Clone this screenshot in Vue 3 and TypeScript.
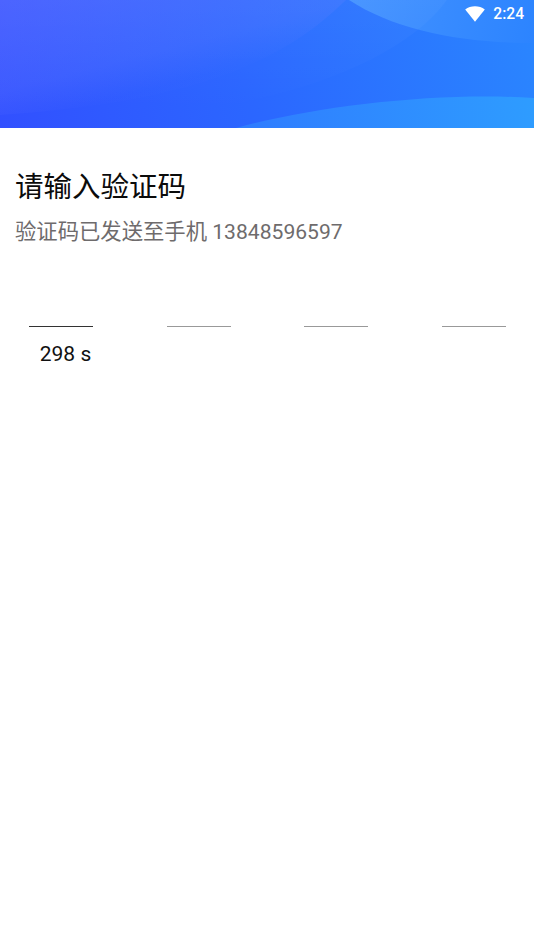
<script setup lang="ts">
const cells: boolean[] = [true, false, false, false]
</script>

<template>
  <main class="page">
    <header class="hero">
      <svg class="art" viewBox="0 0 534 128" preserveAspectRatio="none" aria-hidden="true">
        <defs>
          <linearGradient id="bg" x1="0" y1="128" x2="534" y2="0" gradientUnits="userSpaceOnUse">
            <stop offset="0" stop-color="#3250ff" />
            <stop offset="0.45" stop-color="#2b66ff" />
            <stop offset="1" stop-color="#2a86ff" />
          </linearGradient>
          <linearGradient id="bl" x1="0" y1="0" x2="31" y2="120" gradientUnits="userSpaceOnUse">
            <stop offset="0" stop-color="#7078ff" stop-opacity="0.36" />
            <stop offset="0.72" stop-color="#6c80ff" stop-opacity="0.2" />
            <stop offset="1" stop-color="#6c80ff" stop-opacity="0.02" />
          </linearGradient>
          <linearGradient id="md" x1="0" y1="0" x2="0" y2="110" gradientUnits="userSpaceOnUse">
            <stop offset="0" stop-color="#ffffff" stop-opacity="0.035" />
            <stop offset="1" stop-color="#ffffff" stop-opacity="0" />
          </linearGradient>
          <linearGradient id="tr" x1="350" y1="0" x2="534" y2="40" gradientUnits="userSpaceOnUse">
            <stop offset="0" stop-color="#4492ff" />
            <stop offset="1" stop-color="#2c84ff" />
          </linearGradient>
          <linearGradient id="br" x1="240" y1="128" x2="534" y2="100" gradientUnits="userSpaceOnUse">
            <stop offset="0" stop-color="#2f7cff" />
            <stop offset="1" stop-color="#2e9cff" />
          </linearGradient>
        </defs>
        <rect width="534" height="128" fill="url(#bg)" />
        <path d="M349 0C395 30 460 43 534 43V0Z" fill="url(#tr)" />
        <path d="M447 0C410 50 330 85 230 105C150 120 70 126 0 128V0Z" fill="url(#md)" />
        <path d="M346 0C305 40 260 65 200 83C140 101 70 110 0 115V0Z" fill="url(#bl)" />
        <path d="M236 128C320 105 440 92 534 98V128Z" fill="url(#br)" />
      </svg>
      <div class="status">
        <svg class="wifi" viewBox="0 0 20 16" aria-hidden="true">
          <path d="M0.2 3.6C3 1.4 6.3 0.3 10 0.3s7 1.1 9.8 3.3L10 15.8Z" fill="#fff" />
        </svg>
        <span class="time">2:24</span>
      </div>
    </header>

    <section class="intro">
      <h1 class="title">请输入验证码</h1>
      <p class="sub">验证码已发送至手机 <span class="num">13848596597</span></p>
    </section>

    <div class="cells">
      <span v-for="(active, i) in cells" :key="i" class="cell" :class="{ active }"></span>
    </div>
    <div class="timer">298 s</div>
  </main>
</template>

<style>
html, body { margin: 0; background: #fff; }
</style>

<style scoped>
.page {
  width: 534px;
  height: 949px;
  background: #fff;
  font-family: Roboto, "Noto Sans CJK SC", sans-serif;
  overflow: hidden;
}
.hero {
  position: relative;
  height: 128px;
}
.art {
  position: absolute;
  inset: 0;
  width: 100%;
  height: 100%;
  display: block;
}
.status {
  position: absolute;
  top: 5px;
  right: 10px;
  display: flex;
  align-items: center;
  gap: 8px;
  height: 18px;
  color: #fff;
}
.wifi { width: 20px; height: 16px; display: block; }
.time { font-size: 15.6px; font-weight: 500; line-height: 18px; }
.intro { padding: 43px 15px 0; }
.title {
  margin: 0;
  font-size: 28.5px;
  font-weight: 400;
  line-height: 34px;
  color: #0b0b0b;
}
.sub {
  margin: 13px 0 0;
  font-size: 21.33px;
  line-height: 28px;
  color: #6e6b6c;
}
.num { font-size: 21.1px; }
.cells {
  display: flex;
  justify-content: space-between;
  padding: 80px 28px 0 29px;
}
.cell {
  width: 64px;
  height: 1px;
  background: #999;
}
.cell.active { background: #333; }
.timer {
  width: 131px;
  margin-top: 15px;
  text-align: center;
  font-size: 21px;
  line-height: 24px;
  color: #111;
}
</style>
